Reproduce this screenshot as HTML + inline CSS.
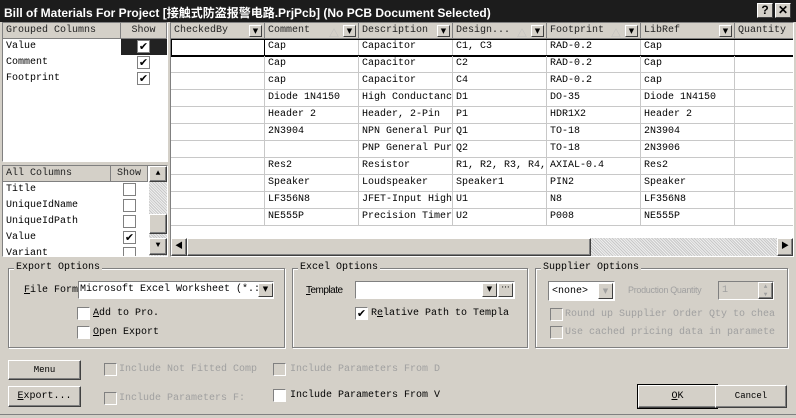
<!DOCTYPE html>
<html><head><meta charset="utf-8"><style>
*{box-sizing:border-box;margin:0;padding:0}
body{width:796px;height:418px;background:#d4d0c8;position:relative;overflow:hidden;font-family:"Liberation Mono","Noto Sans CJK SC",monospace;font-size:10px;color:#000}
.a{position:absolute;white-space:nowrap}
.title{left:0;top:0;width:796px;height:22px;background:#1c1c1c;color:#fff;font:bold 12px "Liberation Sans","Noto Sans CJK SC",sans-serif;padding:4px 0 0 4px}
.tb{top:3px;width:16px;height:15px;background:#d4d0c8;border:1px solid #fff;border-right-color:#404040;border-bottom-color:#404040;color:#000;font:bold 12px "Liberation Sans",sans-serif;text-align:center;line-height:13px}
.panel{background:#fff;border:1px solid #808080;border-right-color:#fff;border-bottom-color:#fff}
.hdr{background:#d4d0c8;border-right:1px solid #808080;border-bottom:1px solid #808080;height:16px;padding:2px 3px;color:#222}
.cb{width:13px;height:13px;border:1px solid #808080;background:#fff;font-size:11px;line-height:11px;text-align:center;font-family:"DejaVu Sans",sans-serif}
.dd{width:13px;height:12px;background:#d4d0c8;border:1px solid #fff;border-right-color:#404040;border-bottom-color:#404040;font-size:7px;text-align:center;line-height:10px;font-family:"DejaVu Sans",sans-serif}
.row{position:absolute;left:0;height:17px;width:634px;border-bottom:1px solid #c8c8c8}
.row div{position:absolute;top:0;height:16px;border-right:1px solid #c8c8c8;padding:2px 3px;overflow:hidden;white-space:nowrap}
.c1{left:0;width:94px}.c2{left:94px;width:94px}.c3{left:188px;width:94px}.c4{left:282px;width:94px}.c5{left:376px;width:94px}.c6{left:470px;width:94px}.c7{left:564px;width:70px}
.grp{border:1px solid #808080;box-shadow:1px 1px 0 #fff inset,1px 1px 0 #fff}
.lg{background:#d4d0c8;padding:0 2px;top:-7px;left:6px}
.btn{background:#d4d0c8;border:1px solid #fff;border-right-color:#404040;border-bottom-color:#404040;box-shadow:inset -1px -1px 0 #808080;text-align:center}
.dis{color:#a0a0a0}
.ck{width:13px;height:13px;border:1px solid #808080;border-right-color:#fff;border-bottom-color:#fff;background:#fff}
.ckd{background:#d4d0c8}
</style></head><body>
<div class="a title">Bill of Materials For Project [接触式防盗报警电路.PrjPcb] (No PCB Document Selected)</div>
<div class="a tb" style="left:757px">?</div><div class="a tb" style="left:775px">✕</div>

<div class="a panel" style="left:2px;top:22px;width:166px;height:140px">
<div class="a hdr" style="left:0;top:0;width:118px">Grouped Columns</div>
<div class="a hdr" style="left:118px;top:0;width:46px;text-align:center">Show</div>
<div class="a" style="left:3px;top:18px">Value</div><div class="a" style="left:118px;top:16px;width:46px;height:16px;background:#222"></div><div class="a cb" style="left:134px;top:17px">✔</div>
<div class="a" style="left:3px;top:34px">Comment</div><div class="a cb" style="left:134px;top:33px">✔</div>
<div class="a" style="left:3px;top:50px">Footprint</div><div class="a cb" style="left:134px;top:49px">✔</div>
</div>

<div class="a panel" style="left:2px;top:165px;width:166px;height:92px;overflow:hidden">
<div class="a hdr" style="left:0;top:0;width:108px">All Columns</div>
<div class="a hdr" style="left:108px;top:0;width:37px;text-align:center">Show</div>
<div class="a" style="left:3px;top:18px">Title</div><div class="a cb" style="left:120px;top:17px"></div>
<div class="a" style="left:3px;top:34px">UniqueIdName</div><div class="a cb" style="left:120px;top:33px"></div>
<div class="a" style="left:3px;top:50px">UniqueIdPath</div><div class="a cb" style="left:120px;top:49px"></div>
<div class="a" style="left:3px;top:66px">Value</div><div class="a cb" style="left:120px;top:65px">✔</div>
<div class="a" style="left:3px;top:82px">Variant</div><div class="a cb" style="left:120px;top:81px"></div>
<div class="a" style="left:146px;top:0;width:18px;height:90px;background:repeating-linear-gradient(45deg,#c8c8c8 0 1px,#eee 1px 2px)"></div>
<div class="a btn" style="left:146px;top:0;width:18px;height:16px;font-size:8px;line-height:13px">▲</div>
<div class="a btn" style="left:146px;top:48px;width:18px;height:20px"></div>
<div class="a btn" style="left:146px;top:72px;width:18px;height:17px;font-size:8px;line-height:14px">▼</div>
</div>

<div class="a panel" style="left:170px;top:22px;width:624px;height:235px;overflow:hidden">
<div class="a hdr" style="left:0;width:94px">CheckedBy</div><div class="a dd" style="left:78px;top:2px">▼</div>
<div class="a hdr" style="left:94px;width:94px">Comment</div><div class="a dd" style="left:172px;top:2px">▼</div><div class="a" style="left:158px;top:2px;color:#bbb">△</div>
<div class="a hdr" style="left:188px;width:94px">Description</div><div class="a dd" style="left:266px;top:2px">▼</div>
<div class="a hdr" style="left:282px;width:94px">Design...</div><div class="a dd" style="left:360px;top:2px">▼</div><div class="a" style="left:346px;top:2px;color:#bbb">△</div>
<div class="a hdr" style="left:376px;width:94px">Footprint</div><div class="a dd" style="left:454px;top:2px">▼</div><div class="a" style="left:440px;top:2px;color:#bbb">△</div>
<div class="a hdr" style="left:470px;width:94px">LibRef</div><div class="a dd" style="left:548px;top:2px">▼</div>
<div class="a hdr" style="left:564px;width:70px">Quantity</div>

<div class="row" style="top:16px"><div class="c1"></div><div class="c2">Cap</div><div class="c3">Capacitor</div><div class="c4">C1, C3</div><div class="c5">RAD-0.2</div><div class="c6">Cap</div><div class="c7"></div></div>
<div class="a" style="left:0;top:16px;width:634px;height:18px;border:1px solid #000;border-bottom-width:2px"></div>
<div class="a" style="left:1px;top:17px;width:93px;height:15px;border:1px solid #000;border-width:0 1px 0 0"></div>
<div class="row" style="top:33px"><div class="c1"></div><div class="c2">Cap</div><div class="c3">Capacitor</div><div class="c4">C2</div><div class="c5">RAD-0.2</div><div class="c6">Cap</div><div class="c7"></div></div>
<div class="row" style="top:50px"><div class="c1"></div><div class="c2">cap</div><div class="c3">Capacitor</div><div class="c4">C4</div><div class="c5">RAD-0.2</div><div class="c6">cap</div><div class="c7"></div></div>
<div class="row" style="top:67px"><div class="c1"></div><div class="c2">Diode 1N4150</div><div class="c3">High Conductanc</div><div class="c4">D1</div><div class="c5">DO-35</div><div class="c6">Diode 1N4150</div><div class="c7"></div></div>
<div class="row" style="top:84px"><div class="c1"></div><div class="c2">Header 2</div><div class="c3">Header, 2-Pin</div><div class="c4">P1</div><div class="c5">HDR1X2</div><div class="c6">Header 2</div><div class="c7"></div></div>
<div class="row" style="top:101px"><div class="c1"></div><div class="c2">2N3904</div><div class="c3">NPN General Pur</div><div class="c4">Q1</div><div class="c5">TO-18</div><div class="c6">2N3904</div><div class="c7"></div></div>
<div class="row" style="top:118px"><div class="c1"></div><div class="c2"></div><div class="c3">PNP General Pur</div><div class="c4">Q2</div><div class="c5">TO-18</div><div class="c6">2N3906</div><div class="c7"></div></div>
<div class="row" style="top:135px"><div class="c1"></div><div class="c2">Res2</div><div class="c3">Resistor</div><div class="c4">R1, R2, R3, R4,</div><div class="c5">AXIAL-0.4</div><div class="c6">Res2</div><div class="c7"></div></div>
<div class="row" style="top:152px"><div class="c1"></div><div class="c2">Speaker</div><div class="c3">Loudspeaker</div><div class="c4">Speaker1</div><div class="c5">PIN2</div><div class="c6">Speaker</div><div class="c7"></div></div>
<div class="row" style="top:169px"><div class="c1"></div><div class="c2">LF356N8</div><div class="c3">JFET-Input High</div><div class="c4">U1</div><div class="c5">N8</div><div class="c6">LF356N8</div><div class="c7"></div></div>
<div class="row" style="top:186px"><div class="c1"></div><div class="c2">NE555P</div><div class="c3">Precision Timer</div><div class="c4">U2</div><div class="c5">P008</div><div class="c6">NE555P</div><div class="c7"></div></div>

<div class="a" style="left:0;top:215px;width:622px;height:18px;background:repeating-linear-gradient(45deg,#c8c8c8 0 1px,#eee 1px 2px)"></div>
<div class="a btn" style="left:0;top:215px;width:16px;height:18px;font-size:8px;line-height:15px">◀</div>
<div class="a btn" style="left:16px;top:215px;width:404px;height:18px"></div>
<div class="a btn" style="left:606px;top:215px;width:16px;height:18px;font-size:8px;line-height:15px">▶</div>
</div>

<div class="a grp" style="left:8px;top:268px;width:277px;height:80px"></div>
<div class="a lg" style="left:14px;top:262px">Export Options</div>
<div class="a" style="left:24px;top:285px"><u>F</u>ile Form</div>
<div class="a" style="left:78px;top:281px;width:196px;height:18px;background:#fff;border:1px solid #808080;border-right-color:#fff;border-bottom-color:#fff;padding:2px 1px;overflow:hidden">Microsoft Excel Worksheet (*.:</div>
<div class="a dd" style="left:258px;top:283px;width:15px;height:14px">▼</div>
<div class="a ck" style="left:77px;top:307px"></div><div class="a" style="left:93px;top:308px"><u>A</u>dd to Pro.</div>
<div class="a ck" style="left:77px;top:326px"></div><div class="a" style="left:93px;top:327px"><u>O</u>pen Export</div>

<div class="a grp" style="left:292px;top:268px;width:236px;height:80px"></div>
<div class="a lg" style="left:298px;top:262px">Excel Options</div>
<div class="a" style="left:306px;top:285px;font-family:'Liberation Sans',sans-serif;font-size:10px;letter-spacing:-0.5px"><u>T</u>emplate</div>
<div class="a" style="left:355px;top:281px;width:160px;height:18px;background:#fff;border:1px solid #808080;border-right-color:#fff;border-bottom-color:#fff"></div>
<div class="a dd" style="left:482px;top:283px;width:15px;height:14px">▼</div>
<div class="a dd" style="left:498px;top:283px;width:15px;height:14px;font-size:9px;line-height:8px">···</div>
<div class="a ck" style="left:355px;top:307px;font-size:11px;line-height:11px;text-align:center;font-family:'DejaVu Sans'">✔</div><div class="a" style="left:371px;top:308px">R<u>e</u>lative Path to Templa</div>

<div class="a grp" style="left:535px;top:268px;width:253px;height:80px"></div>
<div class="a lg" style="left:541px;top:262px">Supplier Options</div>
<div class="a" style="left:548px;top:281px;width:67px;height:20px;background:#fff;border:1px solid #808080;border-right-color:#fff;border-bottom-color:#fff;padding:4px 3px">&lt;none&gt;</div>
<div class="a dd dis" style="left:598px;top:283px;width:15px;height:16px;line-height:14px">▼</div>
<div class="a dis" style="left:628px;top:285px;font-family:'Liberation Sans',sans-serif;font-size:9px;letter-spacing:-0.3px">Production Quantity</div>
<div class="a" style="left:718px;top:281px;width:56px;height:19px;background:#d4d0c8;border:1px solid #808080;border-right-color:#fff;border-bottom-color:#fff;padding:3px 3px;color:#a0a0a0">1</div>
<div class="a btn dis" style="left:758px;top:282px;width:15px;height:17px;font-size:6px;line-height:8px">▲<br>▼</div>
<div class="a ck ckd" style="left:550px;top:308px"></div><div class="a dis" style="left:565px;top:309px">Round up Supplier Order Qty to chea</div>
<div class="a ck ckd" style="left:550px;top:326px"></div><div class="a dis" style="left:565px;top:327px">Use cached pricing data in paramete</div>

<div class="a btn" style="left:8px;top:360px;width:73px;height:20px;font-size:9px;line-height:18px">Menu</div>
<div class="a btn" style="left:8px;top:386px;width:73px;height:21px;line-height:19px"><u>E</u>xport...</div>
<div class="a ck ckd" style="left:104px;top:363px"></div><div class="a dis" style="left:119px;top:364px">Include Not Fitted Comp</div>
<div class="a ck ckd" style="left:104px;top:392px"></div><div class="a dis" style="left:119px;top:393px">Include Parameters F:</div>
<div class="a ck ckd" style="left:273px;top:363px"></div><div class="a dis" style="left:290px;top:364px">Include Parameters From D</div>
<div class="a ck" style="left:273px;top:389px"></div><div class="a" style="left:290px;top:390px">Include Parameters From V</div>
<div class="a btn" style="left:638px;top:385px;width:79px;height:23px;line-height:21px;outline:1px solid #000"><u>O</u>K</div>
<div class="a btn" style="left:715px;top:385px;width:72px;height:23px;line-height:21px;font-size:9px">Cancel</div>
<div class="a" style="left:0;top:414px;width:796px;height:4px;border-top:1px solid #808080;background:#d4d0c8"></div>
</body></html>
